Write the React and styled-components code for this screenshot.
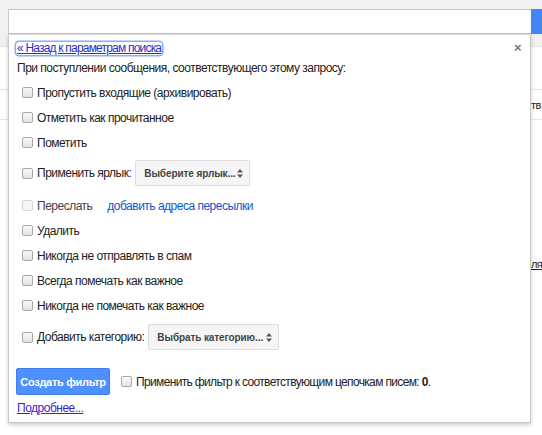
import React from 'react';
import styled, { createGlobalStyle } from 'styled-components';

const GlobalStyle = createGlobalStyle`
  html, body {
    margin: 0;
    padding: 0;
    background: #fff;
    font-family: "Liberation Sans", Arial, sans-serif;
  }
`;

const Page = styled.div`
  position: relative;
  width: 542px;
  height: 435px;
  overflow: hidden;
  background: #fff;
`;

const Header = styled.div`
  height: 47px;
  background: #f1f1f1;
  border-bottom: 1px solid #e5e5e5;
  padding-top: 9px;
  box-sizing: border-box;
`;

const SearchRow = styled.div`
  display: flex;
  height: 25px;
  padding-left: 8px;
`;

const SearchInput = styled.div`
  flex: 1;
  background: #fff;
  border: 1px solid #c7c7c7;
  border-right: none;
`;

const SearchButton = styled.div`
  width: 11px;
  background: #4285f4;
`;

const ListRow = styled.div`
  height: ${p => p.$h}px;
  border-bottom: ${p => (p.$line ? '1px solid #e5e5e5' : 'none')};
  box-sizing: border-box;
  padding-left: 531px;
  display: flex;
  align-items: ${p => p.$align || 'center'};
  font-size: 11px;
  letter-spacing: -0.6px;
  color: #222;
  white-space: nowrap;
`;

const Peek = styled.span`
  text-decoration: ${p => (p.$u ? 'underline' : 'none')};
`;

/* dropdown panel laid over the page */
const Panel = styled.div`
  position: absolute;
  left: 8px;
  top: 34px;
  width: 523px;
  height: 389px;
  box-sizing: border-box;
  background: #fff;
  border: 1px solid #c9c9c9;
  border-top: 1px solid #d8d8d8;
  box-shadow: 0 2px 4px rgba(0, 0, 0, 0.2);
  padding: 6px 8px 8px 8px;
  display: flex;
  flex-direction: column;
  font-size: 12px;
  letter-spacing: -0.5px;
  color: #222;
`;

const TopLine = styled.div`
  display: flex;
  justify-content: space-between;
  align-items: center;
  height: 14px;
`;

const BackLink = styled.a`
  color: #2630c9;
  text-decoration: underline;
  letter-spacing: -0.8px;
  line-height: 13px;
  border-radius: 3px;
  padding: 0 1px;
  margin-left: -1px;
  box-shadow: 0 0 0 1.5px rgba(90, 150, 250, 0.75);
`;

const Close = styled.span`
  color: #777;
  font-size: 13px;
  font-weight: bold;
  margin-right: 1px;
  line-height: 14px;
`;

const Intro = styled.div`
  margin-top: 6px;
  height: 15px;
  line-height: 15px;
`;

const Options = styled.div`
  display: flex;
  flex-direction: column;
  margin-top: 4px;
  padding-left: 5px;
`;

const Row = styled.label`
  display: flex;
  align-items: center;
  height: ${p => (p.$select ? 26 : 25)}px;
  margin: ${p => (p.$select ? `${p.$top || 5}px 0 7px` : '0')};
  white-space: nowrap;
`;

const Check = styled.span`
  width: 11px;
  height: 11px;
  box-sizing: border-box;
  border: 1px solid ${p => (p.$disabled ? '#d6d6d6' : '#a8a8a8')};
  border-radius: 2px;
  background: ${p =>
    p.$disabled ? '#f6f6f6' : 'linear-gradient(#f8f8f8, #e4e4e4)'};
  margin-right: 4px;
  flex: none;
`;

const Label = styled.span`
  color: ${p => (p.$disabled ? '#444' : '#222')};
`;

const FwdLink = styled.a`
  color: #1155cc;
  margin-left: 15px;
`;

const Select = styled.div`
  display: flex;
  align-items: center;
  justify-content: space-between;
  width: ${p => p.$w}px;
  height: 26px;
  box-sizing: border-box;
  margin-left: 4px;
  padding: 0 6px 0 8px;
  background: #f5f5f5;
  border: 1px solid #dcdcdc;
  border-radius: 2px;
  font-size: 10px;
  font-weight: bold;
  letter-spacing: -0.1px;
  color: #444;
`;

const Footer = styled.div`
  display: flex;
  align-items: center;
  margin-top: 11px;
`;

const CreateButton = styled.button`
  width: 94px;
  height: 27px;
  background: #4d90fe;
  border: 1px solid #3e7ff0;
  border-radius: 2px;
  color: #fff;
  font-family: inherit;
  font-size: 11px;
  font-weight: bold;
  letter-spacing: -0.3px;
  padding: 0;
  margin-left: -1px;
  margin-right: 11px;
`;

const ApplyText = styled.span`
  letter-spacing: -0.65px;
  b {
    font-weight: bold;
  }
`;

const More = styled.a`
  margin-top: 6px;
  color: #3b1fcb;
  text-decoration: underline;
  line-height: 14px;
  align-self: flex-start;
`;

const Arrows = () => (
  <svg width="6" height="9" viewBox="0 0 6 9">
    <path d="M3 0 L6 3.5 H0 Z M3 9 L0 5.5 H6 Z" fill="#555" />
  </svg>
);

const options = [
  { text: 'Пропустить входящие (архивировать)' },
  { text: 'Отметить как прочитанное' },
  { text: 'Пометить' },
  { text: 'Применить ярлык:', select: 'Выберите ярлык...', w: 115 },
  { text: 'Переслать', forward: true },
  { text: 'Удалить' },
  { text: 'Никогда не отправлять в спам' },
  { text: 'Всегда помечать как важное' },
  { text: 'Никогда не помечать как важное' },
  { text: 'Добавить категорию:', select: 'Выбрать категорию...', w: 131, top: 6 },
];

const App = () => (
  <Page>
    <GlobalStyle />
    <Header>
      <SearchRow>
        <SearchInput />
        <SearchButton />
      </SearchRow>
    </Header>
    <ListRow $h={43} $line />
    <ListRow $h={30} $line>
      <Peek>тв</Peek>
    </ListRow>
    <ListRow $h={150} $align="flex-end">
      <Peek $u>ля</Peek>
    </ListRow>

    <Panel>
      <TopLine>
        <BackLink>« Назад к параметрам поиска</BackLink>
        <Close>×</Close>
      </TopLine>
      <Intro>При поступлении сообщения, соответствующего этому запросу:</Intro>
      <Options>
        {options.map(o => (
          <Row key={o.text} $select={!!o.select} $top={o.top}>
            <Check $disabled={o.forward} />
            <Label $disabled={o.forward}>{o.text}</Label>
            {o.forward && <FwdLink>добавить адреса пересылки</FwdLink>}
            {o.select && (
              <Select $w={o.w}>
                {o.select}
                <Arrows />
              </Select>
            )}
          </Row>
        ))}
      </Options>
      <Footer>
        <CreateButton>Создать фильтр</CreateButton>
        <Check />
        <ApplyText>
          Применить фильтр к соответствующим цепочкам писем: <b>0</b>.
        </ApplyText>
      </Footer>
      <More>Подробнее...</More>
    </Panel>
  </Page>
);

export default App;
